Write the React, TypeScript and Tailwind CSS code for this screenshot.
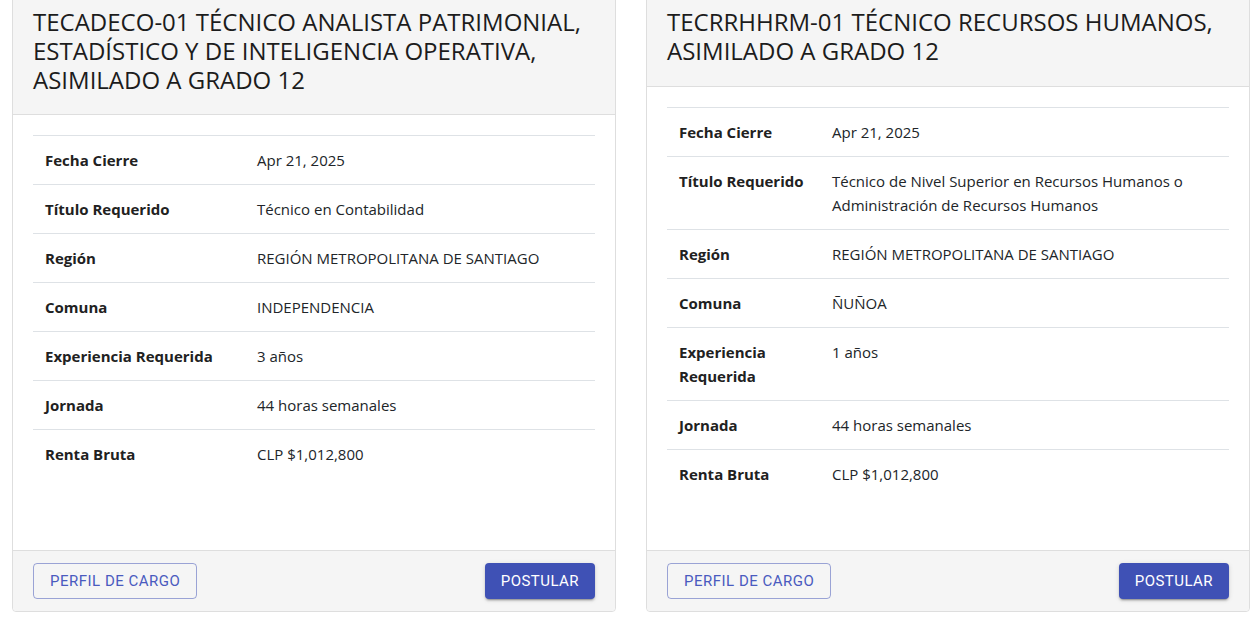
import React from 'react';

type Row = { label: string; value: string };

interface JobCardProps {
  title: string;
  labelWidth: string;
  rows: Row[];
}

const JobCard: React.FC<JobCardProps> = ({ title, labelWidth, rows }) => {
  return (
    <div className="flex h-[625px] flex-col rounded border border-[#dedede] bg-white">
      <div className="border-b border-[#dedede] bg-[#f5f5f5] px-5 py-5">
        <h2 className="text-[24px] leading-[28.8px] font-medium text-[#1c1c1c]">{title}</h2>
      </div>
      <div className="flex-1 p-5">
        <div className="border-t border-[#dee2e6]">
          {rows.map((row, i) => (
            <div
              key={row.label}
              className={`grid ${labelWidth} ${i < rows.length - 1 ? 'border-b border-[#dee2e6]' : ''}`}
            >
              <div className="p-3 text-[15px] leading-6 font-bold text-[#212121]">{row.label}</div>
              <div className="p-3 text-[15px] leading-6 text-[#212529]">{row.value}</div>
            </div>
          ))}
        </div>
      </div>
      <div className="flex items-center justify-between rounded-b border-t border-[#dedede] bg-[#f5f5f5] px-5 py-3 font-['Roboto',sans-serif]">
        <button className="h-9 rounded border border-[rgba(63,81,181,0.5)] px-4 text-[15px] tracking-[0.5px] text-[#4a5bbf] uppercase">
          Perfil de cargo
        </button>
        <button className="h-9 rounded bg-[#3f51b5] px-4 text-[15px] tracking-[0.45px] text-white uppercase shadow-[0_3px_1px_-2px_rgba(0,0,0,0.2),0_2px_2px_0_rgba(0,0,0,0.14),0_1px_5px_0_rgba(0,0,0,0.12)]">
          Postular
        </button>
      </div>
    </div>
  );
};

export default function App() {
  return (
    <div className="h-[627px] overflow-hidden bg-white font-['Open_Sans',sans-serif]">
      <div className="-mt-[13px] grid grid-cols-[604px_604px] gap-[30px] pl-3">
        <JobCard
          title="TECADECO-01 TÉCNICO ANALISTA PATRIMONIAL, ESTADÍSTICO Y DE INTELIGENCIA OPERATIVA, ASIMILADO A GRADO 12"
          labelWidth="grid-cols-[212px_1fr]"
          rows={[
            { label: 'Fecha Cierre', value: 'Apr 21, 2025' },
            { label: 'Título Requerido', value: 'Técnico en Contabilidad' },
            { label: 'Región', value: 'REGIÓN METROPOLITANA DE SANTIAGO' },
            { label: 'Comuna', value: 'INDEPENDENCIA' },
            { label: 'Experiencia Requerida', value: '3 años' },
            { label: 'Jornada', value: '44 horas semanales' },
            { label: 'Renta Bruta', value: 'CLP $1,012,800' },
          ]}
        />
        <JobCard
          title="TECRRHHRM-01 TÉCNICO RECURSOS HUMANOS, ASIMILADO A GRADO 12"
          labelWidth="grid-cols-[153px_1fr]"
          rows={[
            { label: 'Fecha Cierre', value: 'Apr 21, 2025' },
            {
              label: 'Título Requerido',
              value: 'Técnico de Nivel Superior en Recursos Humanos o Administración de Recursos Humanos',
            },
            { label: 'Región', value: 'REGIÓN METROPOLITANA DE SANTIAGO' },
            { label: 'Comuna', value: 'ÑUÑOA' },
            { label: 'Experiencia Requerida', value: '1 años' },
            { label: 'Jornada', value: '44 horas semanales' },
            { label: 'Renta Bruta', value: 'CLP $1,012,800' },
          ]}
        />
      </div>
    </div>
  );
}
